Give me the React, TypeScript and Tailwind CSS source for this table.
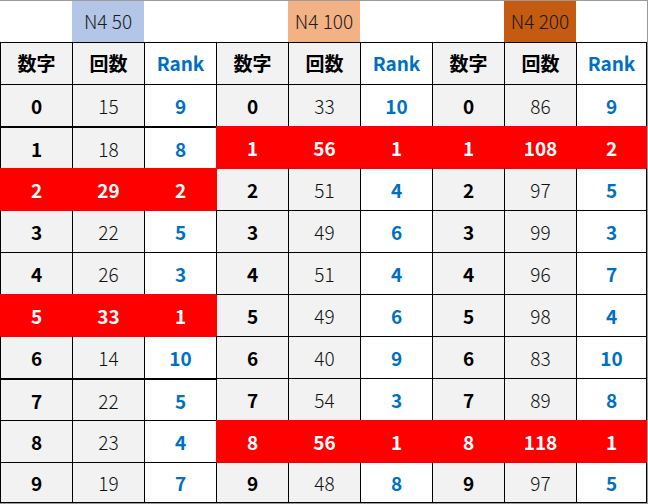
import React from "react";

type Cell = [number, number, number];

const data: Cell[][] = [
  [[0, 15, 9], [0, 33, 10], [0, 86, 9]],
  [[1, 18, 8], [1, 56, 1], [1, 108, 2]],
  [[2, 29, 2], [2, 51, 4], [2, 97, 5]],
  [[3, 22, 5], [3, 49, 6], [3, 99, 3]],
  [[4, 26, 3], [4, 51, 4], [4, 96, 7]],
  [[5, 33, 1], [5, 49, 6], [5, 98, 4]],
  [[6, 14, 10], [6, 40, 9], [6, 83, 10]],
  [[7, 22, 5], [7, 54, 3], [7, 89, 8]],
  [[8, 23, 4], [8, 56, 1], [8, 118, 1]],
  [[9, 19, 7], [9, 48, 8], [9, 97, 5]],
];

const redMap: Record<number, number[]> = {
  1: [1, 2],
  2: [0],
  5: [0],
  8: [1, 2],
};

const isRed = (row: number, col: number) => {
  if (row < 0 || col < 0) return false;
  const g = Math.floor(col / 3);
  return (redMap[row] || []).includes(g);
};

const font = { fontFamily: '"Noto Sans CJK JP", "Noto Sans", sans-serif' };

function DataCell({
  row,
  col,
  value,
}: {
  row: number;
  col: number;
  value: number;
}) {
  const red = isRed(row, col);
  const redAbove = isRed(row - 1, col);
  const redLeft = isRed(row, col - 1);
  const kind = col % 3; // 0 数字, 1 回数, 2 Rank
  const last = col === 8;
  const thick = (row === 1 || row === 7) && col < 3;
  const isLastRow = row === 9;

  const bg = red
    ? "bg-[#ff0000]"
    : kind === 2
    ? "bg-white"
    : "bg-[#f2f2f2]";
  const topB = thick ? "border-t-2" : "border-t";
  const topC = red || redAbove ? "border-t-[#ff0000]" : "border-t-black";
  const leftC = red || redLeft ? "border-l-[#ff0000]" : "border-l-black";
  const rightB = last ? (red ? "border-r border-r-[#ff0000]" : "border-r border-r-black") : "";
  const bottomB = isLastRow ? "border-b border-b-black" : "";
  const w = last ? "w-[71px]" : "w-[72px]";
  const h = isLastRow ? "h-[41px]" : "h-[42px]";

  let text: string;
  if (red) text = "text-white font-bold";
  else if (kind === 0) text = "text-black font-bold";
  else if (kind === 1) text = "text-[#111] font-light";
  else text = "text-[#0070c0] font-bold";

  return (
    <div
      className={`${w} ${h} ${bg} ${topB} ${topC} border-l ${leftC} ${rightB} ${bottomB} flex items-center justify-center text-[19px] leading-none ${text}`}
      style={font}
    >
      {value}
    </div>
  );
}

export default function App() {
  const headerColors = ["bg-[#b4c6e7]", "bg-[#f4b183]", "bg-[#c55a11]"];
  const headerLabels = ["N4 50", "N4 100", "N4 200"];
  return (
    <div className="w-[648px] h-[504px] bg-white border-r border-b border-[#9b9b9b] overflow-hidden">
      {/* top header */}
      <div className="flex h-[42px] border-t border-[#9b9b9b]">
        {Array.from({ length: 9 }).map((_, c) => {
          const g = Math.floor(c / 3);
          const colored = c % 3 === 1;
          const w = c === 8 ? "w-[71px]" : "w-[72px]";
          return (
            <div
              key={c}
              className={`${w} h-full flex items-center justify-center text-[19px] font-light text-[#1a1a1a] ${
                colored ? headerColors[g] : "bg-white"
              }`}
              style={font}
            >
              {colored ? headerLabels[g] : ""}
            </div>
          );
        })}
      </div>
      {/* column header */}
      <div className="flex h-[42px]">
        {Array.from({ length: 9 }).map((_, c) => {
          const kind = c % 3;
          const last = c === 8;
          const w = last ? "w-[71px]" : "w-[72px]";
          const label = kind === 0 ? "数字" : kind === 1 ? "回数" : "Rank";
          return (
            <div
              key={c}
              className={`${w} h-[42px] border-t border-l border-black ${
                last ? "border-r" : ""
              } ${kind === 2 ? "bg-white text-[#0070c0]" : "bg-[#f2f2f2] text-black"} flex items-center justify-center text-[19px] font-bold`}
              style={font}
            >
              {label}
            </div>
          );
        })}
      </div>
      {data.map((groups, r) => (
        <div key={r} className="flex">
          {groups.flatMap((cell, g) =>
            cell.map((v, k) => (
              <DataCell key={`${g}-${k}`} row={r} col={g * 3 + k} value={v} />
            ))
          )}
        </div>
      ))}
    </div>
  );
}
